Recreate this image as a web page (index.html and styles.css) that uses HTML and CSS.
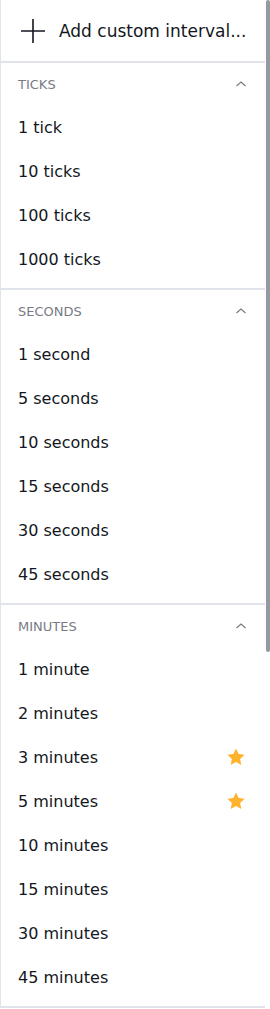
FILE: index.html
```html
<!DOCTYPE html>
<html>
<head>
	<meta charset="UTF-8">
	<link rel="stylesheet" href="styles.css">
</head>
<body>
	<div class="menu">
		<div class="add_row">
			<svg class="plus" width="28" height="28" viewBox="0 0 28 28"><path d="M14 2v24M2 14h24" stroke="#131722" stroke-width="1.6" fill="none"/></svg>
			<span>Add custom interval...</span>
		</div>

		<div class="group">
			<div class="group_head"><span>Ticks</span><svg class="chev" width="12" height="8" viewBox="0 0 12 8"><path d="M1.5 6l4.5-4 4.5 4" stroke="#787b86" stroke-width="1.2" fill="none"/></svg></div>
			<div class="item">1 tick</div>
			<div class="item">10 ticks</div>
			<div class="item">100 ticks</div>
			<div class="item">1000 ticks</div>
		</div>

		<div class="group">
			<div class="group_head"><span>Seconds</span><svg class="chev" width="12" height="8" viewBox="0 0 12 8"><path d="M1.5 6l4.5-4 4.5 4" stroke="#787b86" stroke-width="1.2" fill="none"/></svg></div>
			<div class="item">1 second</div>
			<div class="item">5 seconds</div>
			<div class="item">10 seconds</div>
			<div class="item">15 seconds</div>
			<div class="item">30 seconds</div>
			<div class="item">45 seconds</div>
		</div>

		<div class="group">
			<div class="group_head"><span>Minutes</span><svg class="chev" width="12" height="8" viewBox="0 0 12 8"><path d="M1.5 6l4.5-4 4.5 4" stroke="#787b86" stroke-width="1.2" fill="none"/></svg></div>
			<div class="item">1 minute</div>
			<div class="item">2 minutes</div>
			<div class="item">3 minutes<svg class="star" width="20" height="20" viewBox="0 0 20 20"><path d="M10 1.5l2.6 5.6 6 .7-4.5 4.1 1.2 6-5.3-3-5.3 3 1.2-6L1.4 7.8l6-.7z" fill="#ffb22b"/></svg></div>
			<div class="item">5 minutes<svg class="star" width="20" height="20" viewBox="0 0 20 20"><path d="M10 1.5l2.6 5.6 6 .7-4.5 4.1 1.2 6-5.3-3-5.3 3 1.2-6L1.4 7.8l6-.7z" fill="#ffb22b"/></svg></div>
			<div class="item">10 minutes</div>
			<div class="item">15 minutes</div>
			<div class="item">30 minutes</div>
			<div class="item">45 minutes</div>
		</div>
	</div>
	<div class="scroll_thumb"></div>
</body>
</html>
```

FILE: styles.css
```css
body{
	margin:0;
	background:#ffffff;
	font-family:"DejaVu Sans", "Open Sans", sans-serif;
	color:#131722;
}

.menu{
	width:265px;
	border-left:1px solid #e0e3eb;
	box-sizing:border-box;
}

.add_row{
	height:61px;
	display:flex;
	align-items:center;
	padding-left:18px;
	font-size:17px;
}
.add_row .plus{
	margin-right:12px;
}

.group{
	border-top:2px solid #e0e3eb;
	padding-bottom:7px;
}
.group:last-child{
	border-bottom:2px solid #e0e3eb;
}

.group_head{
	height:42px;
	display:flex;
	align-items:center;
	justify-content:space-between;
	padding:0 18px 0 17px;
	font-size:13px;
	text-transform:uppercase;
	color:#787b86;
}

.item{
	height:44px;
	display:flex;
	align-items:center;
	justify-content:space-between;
	padding:0 18px 0 17px;
	font-size:16px;
}
.item .star{
	margin-right:1px;
}

.scroll_thumb{
	position:absolute;
	top:0;
	right:0;
	width:4px;
	height:652px;
	background:#9598a1;
	border-radius:2px;
}
```
